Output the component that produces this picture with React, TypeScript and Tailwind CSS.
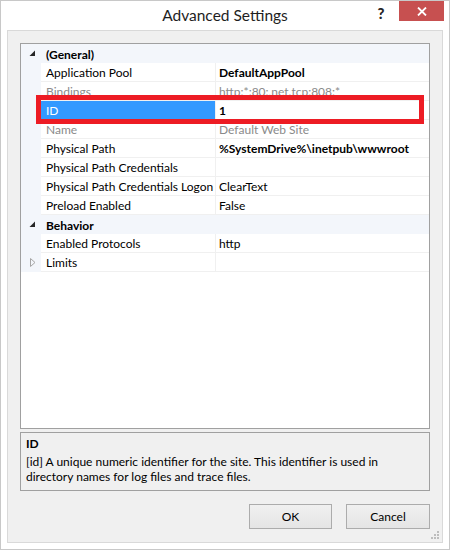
import React from "react";

type Row =
  | { kind: "cat"; label: string; expanded: boolean }
  | {
      kind: "prop";
      name: string;
      value?: string;
      bold?: boolean;
      dim?: boolean;
      selected?: boolean;
      collapsed?: boolean;
    };

const rows: Row[] = [
  { kind: "cat", label: "(General)", expanded: true },
  { kind: "prop", name: "Application Pool", value: "DefaultAppPool", bold: true },
  { kind: "prop", name: "Bindings", value: "http:*:80:,net.tcp:808:*", dim: true },
  { kind: "prop", name: "ID", value: "1", bold: true, selected: true },
  { kind: "prop", name: "Name", value: "Default Web Site", dim: true },
  { kind: "prop", name: "Physical Path", value: "%SystemDrive%\\inetpub\\wwwroot", bold: true },
  { kind: "prop", name: "Physical Path Credentials", value: "" },
  { kind: "prop", name: "Physical Path Credentials Logon", value: "ClearText" },
  { kind: "prop", name: "Preload Enabled", value: "False" },
  { kind: "cat", label: "Behavior", expanded: true },
  { kind: "prop", name: "Enabled Protocols", value: "http" },
  { kind: "prop", name: "Limits", value: "", collapsed: true },
];

const font = { fontFamily: "Lato, 'Noto Sans', sans-serif" };

function ExpandedGlyph() {
  return (
    <svg width="7" height="7" viewBox="0 0 7 7">
      <path d="M6 0.5 L6 6 L0.5 6 Z" fill="#262626" />
    </svg>
  );
}

function CollapsedGlyph() {
  return (
    <svg width="6" height="9" viewBox="0 0 6 9">
      <path d="M0.5 0.5 L5 4.5 L0.5 8.5 Z" fill="none" stroke="#a6a6a6" strokeWidth="1" />
    </svg>
  );
}

function GridRow({ row }: { row: Row }) {
  if (row.kind === "cat") {
    return (
      <div className="flex h-[19px] bg-[#f3f6fb] items-center">
        <div className="w-[20px] flex justify-center items-center pl-[2px]">
          <ExpandedGlyph />
        </div>
        <div className="pl-[5px] pt-[2px] font-bold text-[12px] text-black">{row.label}</div>
      </div>
    );
  }
  return (
    <div className="flex h-[19px]">
      <div className="w-[20px] bg-[#f3f6fb] flex items-center justify-center pl-[3px]">
        {row.collapsed ? <CollapsedGlyph /> : null}
      </div>
      <div
        className={
          "w-[175px] border-b border-r border-[#f0f0f0] pl-[5px] pt-[2px] flex items-center text-[12px] whitespace-nowrap overflow-hidden " +
          (row.selected ? "bg-[#3399ff] text-white" : row.dim ? "text-[#8a8a8a]" : "text-black")
        }
      >
        {row.name}
      </div>
      <div
        className={
          "flex-1 border-b border-[#f0f0f0] pl-[3px] pt-[2px] flex items-center text-[12px] whitespace-nowrap overflow-hidden " +
          (row.bold ? "font-bold " : "") +
          (row.dim ? "text-[#8a8a8a]" : "text-black")
        }
      >
        {row.value}
      </div>
    </div>
  );
}

export default function App() {
  return (
    <div
      className="w-[450px] h-[550px] bg-white border border-[#c8c8c8] flex flex-col"
      style={font}
    >
      {/* title bar */}
      <div className="relative h-[29px] flex items-center justify-center">
        <div className="text-[15.5px] text-[#1e1e1e] mt-[1px]">Advanced Settings</div>
        <div className="absolute right-[5px] top-0 flex items-start">
          <div className="w-[26px] h-[20px] flex items-center justify-center text-[15px] font-black text-[#262626] mr-[5px] mt-[2px]">
            ?
          </div>
          <div className="w-[45px] h-[20px] bg-[#c75050] flex items-center justify-center">
            <svg width="10" height="9" viewBox="0 0 10 9">
              <path d="M1 0.5 L9 8.5 M9 0.5 L1 8.5" stroke="white" strokeWidth="1.8" />
            </svg>
          </div>
        </div>
      </div>

      {/* dialog body */}
      <div className="relative flex-1 mx-[6px] mb-[6px] bg-[#f0f0f0] border border-[#d9d9d9] pt-[12px] px-[12px] flex flex-col">
        {/* property grid */}
        <div className="relative h-[386px] bg-white border border-[#a0a0a0] flex flex-col">
          {rows.map((r, i) => (
            <GridRow key={i} row={r} />
          ))}
          {/* highlight around the selected property */}
          <div className="absolute left-[15px] top-[51px] w-[388px] h-[29px] border-[5px] border-[#ed1c24] pointer-events-none" />
        </div>

        {/* description */}
        <div className="mt-[3px] h-[59px] border border-[#a0a0a0] px-[5px] pt-[3px] text-[12px] text-black">
          <div className="font-bold leading-[16px]">ID</div>
          <div className="leading-[15px] mt-[2px]">
            [id] A unique numeric identifier for the site. This identifier is used in
            <br />
            directory names for log files and trace files.
          </div>
        </div>

        {/* buttons */}
        <div className="mt-[13px] flex justify-end gap-[14px]">
          <button className="w-[83px] h-[25px] border border-[#acacac] bg-gradient-to-b from-[#f0f0f0] to-[#e5e5e5] text-[12px] text-black">
            OK
          </button>
          <button className="w-[84px] h-[25px] border border-[#acacac] bg-gradient-to-b from-[#f0f0f0] to-[#e5e5e5] text-[12px] text-black">
            Cancel
          </button>
        </div>

        {/* size grip */}
        <svg className="absolute right-[2px] bottom-[2px]" width="10" height="10" viewBox="0 0 10 10">
          <rect x="7" y="1" width="2" height="2" fill="#bdbdbd" />
          <rect x="4" y="4" width="2" height="2" fill="#bdbdbd" />
          <rect x="7" y="4" width="2" height="2" fill="#bdbdbd" />
          <rect x="1" y="7" width="2" height="2" fill="#bdbdbd" />
          <rect x="4" y="7" width="2" height="2" fill="#bdbdbd" />
          <rect x="7" y="7" width="2" height="2" fill="#bdbdbd" />
        </svg>
      </div>
    </div>
  );
}
